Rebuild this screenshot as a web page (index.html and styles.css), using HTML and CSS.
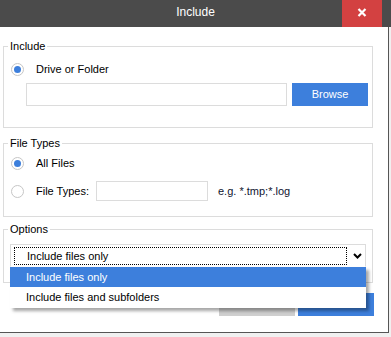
FILE: index.html
```html
<!DOCTYPE html>
<html lang="en">
<head>
  <meta charset="UTF-8" />
  <title>Include</title>
  <link rel="stylesheet" href="styles.css">
</head>
<body>

  <div class="titlebar">
    <span class="title">Include</span>
    <div class="close">
      <svg width="10" height="9" viewBox="0 0 10 9">
        <path d="M1.5 1 L8.5 8 M8.5 1 L1.5 8" stroke="#fff" stroke-width="2.2" fill="none"/>
      </svg>
    </div>
  </div>

  <div class="window">

    <div class="group first">
      <div class="caption">Include</div>
      <div class="radio-row">
        <span class="radio checked"></span>
        <span class="label">Drive or Folder</span>
      </div>
      <div class="path-row">
        <div class="textbox path"></div>
        <div class="btn blue browse">Browse</div>
      </div>
    </div>

    <div class="group types">
      <div class="caption">File Types</div>
      <div class="radio-row">
        <span class="radio checked"></span>
        <span class="label">All Files</span>
      </div>
      <div class="radio-row second">
        <span class="radio"></span>
        <span class="label">File Types:</span>
        <div class="textbox mask"></div>
        <span class="hint">e.g. *.tmp;*.log</span>
      </div>
    </div>

    <div class="group options">
      <div class="caption">Options</div>
      <div class="select">
        <div class="focus">Include files only</div>
        <svg class="chevron" width="9" height="6" viewBox="0 0 9 6">
          <path d="M1 1 L4.5 4.5 L8 1" stroke="#000" stroke-width="2" fill="none"/>
        </svg>
        <div class="dropdown">
          <div class="option active">Include files only</div>
          <div class="option">Include files and subfolders</div>
        </div>
      </div>
    </div>

    <div class="buttons">
      <div class="btn gray">OK</div>
      <div class="btn blue">Cancel</div>
    </div>

  </div>

</body>
</html>
```

FILE: styles.css
```css
body {
  margin: 0;
  background-color: #f0f0f0;
  font-family: "Liberation Sans", Arial, sans-serif;
  font-size: 11px;
  color: #000;
}

.titlebar {
  position: relative;
  width: 391px;
  height: 27px;
  background-color: #4b4b4b;
  color: #fff;
  text-align: center;
}

.title {
  font-size: 12px;
  line-height: 25px;
}

.close {
  position: absolute;
  top: 0;
  left: 342px;
  width: 40px;
  height: 27px;
  background-color: #d34141;
  display: flex;
  align-items: center;
  justify-content: center;
}

.close svg {
  margin-top: -3px;
}

.window {
  width: 385px;
  height: 286px;
  background-color: #fff;
  border-right: 1px solid #555;
  border-bottom: 1px solid #555;
  padding: 19px 0 0 3px;
}

.group {
  width: 370px;
  box-sizing: border-box;
  border: 1px solid #dcdcdc;
}

.caption {
  display: table;
  margin: -8px 0 0 4px;
  padding: 0 2px;
  background-color: #fff;
  line-height: 14px;
}

.radio-row {
  display: flex;
  align-items: center;
  height: 16px;
  padding-left: 7px;
}

.first .radio-row {
  margin-top: 8px;
}

.radio {
  width: 13px;
  height: 13px;
  box-sizing: border-box;
  border: 1px solid #c6c6c6;
  border-radius: 50%;
  background-color: #fff;
  display: flex;
  align-items: center;
  justify-content: center;
  flex: none;
}

.radio.checked::after {
  content: "";
  width: 7px;
  height: 7px;
  border-radius: 50%;
  background-color: #3d7fdc;
}

.label {
  margin-left: 12px;
}

.path-row {
  display: flex;
  margin-top: 6px;
  padding-left: 22px;
}

.first {
  padding-bottom: 21px;
}

.textbox {
  box-sizing: border-box;
  border: 1px solid #dcdcdc;
  background-color: #fff;
}

.path {
  width: 261px;
  height: 23px;
}

.btn {
  width: 76px;
  height: 23px;
  line-height: 23px;
  text-align: center;
}

.blue {
  background-color: #3d7fdc;
  color: #fff;
}

.gray {
  background-color: #cfcfcf;
  color: #000;
}

.browse {
  margin-left: 5px;
}

.types {
  margin-top: 15px;
  padding-bottom: 15px;
}

.types .radio-row {
  margin-top: 5px;
}

.types .radio-row.second {
  margin-top: 10px;
  height: 20px;
}

.mask {
  width: 112px;
  height: 20px;
  margin-left: 7px;
}

.hint {
  margin-left: 10px;
  color: #0f1430;
}

.options {
  margin-top: 12px;
  padding-bottom: 15px;
}

.select {
  position: relative;
  display: flex;
  align-items: center;
  width: 356px;
  height: 23px;
  box-sizing: border-box;
  margin: 8px 0 0 6px;
  border: 1px solid #dcdcdc;
  border-bottom-color: #fff;
}

.focus {
  width: 333px;
  height: 18px;
  box-sizing: border-box;
  margin-left: 3px;
  border: 1px dotted #000;
  padding-left: 12px;
  line-height: 16px;
}

.chevron {
  margin-left: 6px;
  margin-top: 1px;
}

.dropdown {
  position: absolute;
  top: 22px;
  left: -1px;
  width: 356px;
  background-color: #fff;
  padding-bottom: 1px;
  box-shadow: 3px 3px 3px rgba(0, 0, 0, 0.35);
  z-index: 2;
}

.option {
  height: 20px;
  line-height: 20px;
  padding-left: 16px;
}

.option.active {
  background-color: #3d7fdc;
  color: #fff;
}

.buttons {
  display: flex;
  justify-content: flex-end;
  gap: 3px;
  width: 371px;
  margin-top: 10px;
}
```
